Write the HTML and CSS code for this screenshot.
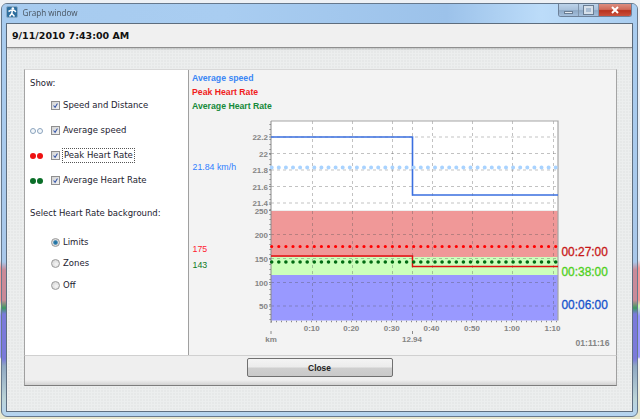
FILE: index.html
```html
<!DOCTYPE html>
<html lang="en">
<head>
    <meta charset="UTF-8">
    <title>Graph window</title>
    <link rel="stylesheet" href="styles.css">
</head>
<body>
    <div class="window">
        <div class="titlebar">
            <svg class="app-icon" viewBox="0 0 12 12">
                <rect x="0.5" y="0.5" width="11" height="11" rx="1.5" fill="#2f6f9f" stroke="#86a9c6"/>
                <circle cx="6.8" cy="2.6" r="1.3" fill="#fff"/>
                <path d="M2.5 5.5 L5 4.2 H8 L10 5.8 M6.3 4.5 L5.8 7.5 L3.5 10.5 M5.8 7.5 L8.5 10.5" fill="none" stroke="#fff" stroke-width="1.5"/>
            </svg>
            <span class="title">Graph window</span>
            <div class="caption-btns">
                <div class="cap-btn cap-min"><span class="glyph-min"></span></div>
                <div class="cap-btn cap-max"><span class="glyph-max"></span></div>
                <div class="cap-btn cap-close">
                    <svg class="glyph-close" viewBox="0 0 10 8"><path d="M2 1 L8 7 M8 1 L2 7" stroke="#fff" stroke-width="2"/></svg>
                </div>
            </div>
        </div>

        <div class="client">
            <div class="header">9/11/2010 7:43:00 AM</div>

            <div class="content">
                <div class="panel">
                    <!-- Left options -->
                    <div class="options">
                        <div class="heading heading-show">Show:</div>
                        <div class="row">
                            <span class="dots"></span>
                            <span class="check"><svg viewBox="0 0 9 9"><path d="M2 4.5 L4 6.8 L7 2" fill="none" stroke="#3354a8" stroke-width="1.3"/></svg></span>
                            <span class="row-label">Speed and Distance</span>
                        </div>
                        <div class="row">
                            <span class="dots"><i class="dot dot-hollow"></i><i class="dot dot-hollow"></i></span>
                            <span class="check"><svg viewBox="0 0 9 9"><path d="M2 4.5 L4 6.8 L7 2" fill="none" stroke="#3354a8" stroke-width="1.3"/></svg></span>
                            <span class="row-label">Average speed</span>
                        </div>
                        <div class="row">
                            <span class="dots"><i class="dot dot-red"></i><i class="dot dot-red"></i></span>
                            <span class="check"><svg viewBox="0 0 9 9"><path d="M2 4.5 L4 6.8 L7 2" fill="none" stroke="#3354a8" stroke-width="1.3"/></svg></span>
                            <span class="row-label focused">Peak Heart Rate</span>
                        </div>
                        <div class="row">
                            <span class="dots"><i class="dot dot-green"></i><i class="dot dot-green"></i></span>
                            <span class="check"><svg viewBox="0 0 9 9"><path d="M2 4.5 L4 6.8 L7 2" fill="none" stroke="#3354a8" stroke-width="1.3"/></svg></span>
                            <span class="row-label">Average Heart Rate</span>
                        </div>

                        <div class="heading heading-bg">Select Heart Rate background:</div>
                        <div class="radio-row"><span class="radio radio-on"></span><span class="row-label">Limits</span></div>
                        <div class="radio-row"><span class="radio"></span><span class="row-label">Zones</span></div>
                        <div class="radio-row"><span class="radio"></span><span class="row-label">Off</span></div>
                    </div>

                    <!-- Graph -->
                    <div class="graph">
                        <div class="legend">
                            <div class="legend-speed">Average speed</div>
                            <div class="legend-peak">Peak Heart Rate</div>
                            <div class="legend-avg">Average Heart Rate</div>
                        </div>
                        <svg class="chart" viewBox="190 114 427 240">
                            <!-- plot background and heart rate zones -->
                            <rect x="272" y="121" width="287" height="89" fill="#fff"/>
                            <rect x="272" y="210" width="287" height="1.5" fill="#eee"/>
                            <rect x="272" y="211" width="287" height="46" fill="#f09898"/>
                            <rect x="272" y="257" width="287" height="18" fill="#ccffbb"/>
                            <rect x="272" y="275" width="287" height="45.5" fill="#9999ff"/>

                            <!-- grid -->
                            <path class="grid" d="M272 137 H559 M272 153.5 H559 M272 170 H559 M272 186.5 H559 M272 203 H559 M272 234.5 H559 M272 258.5 H559 M272 282.5 H559 M272 306 H559"/>
                            <path class="grid" d="M313.5 121 V320 M353.5 121 V320 M393.5 121 V320 M413.5 121 V320 M433.5 121 V320 M473.5 121 V320 M513.5 121 V320 M554.5 121 V320"/>

                            <!-- frame and ticks -->
                            <path class="frame" d="M272 121 H559 V320.5"/>
                            <path class="axis" d="M272 121 V323"/>
                            <line class="ticks" x1="271.2" y1="124" x2="271.2" y2="320"/>
                            <path class="axis" d="M270 137 H272 M270 153.5 H272 M270 170 H272 M270 186.5 H272 M270 203 H272 M270 210.5 H272 M270 234.5 H272 M270 258.5 H272 M270 282.5 H272 M270 306 H272"/>
                            <line class="ticks" x1="272" y1="321.5" x2="559" y2="321.5"/>
                            <path class="axis" d="M272 331 V334 M413.5 331 V334"/>

                            <!-- series -->
                            <path class="line-speed" d="M272 137 H413.5 V195 H559"/>
                            <line class="dots-speed" x1="272.7" y1="167.5" x2="559" y2="167.5"/>
                            <path class="line-peak" d="M272 256 H413.5 V266.5 H559"/>
                            <line class="dots-peak" x1="272.7" y1="246.5" x2="559" y2="246.5"/>
                            <line class="dots-avg" x1="272.7" y1="262" x2="559" y2="262"/>

                            <!-- axis labels -->
                            <g class="label label-end">
                                <text x="269" y="140">22.2</text>
                                <text x="269" y="156.5">22</text>
                                <text x="269" y="173">21.8</text>
                                <text x="269" y="189.5">21.6</text>
                                <text x="269" y="206">21.4</text>
                                <text x="269" y="213.5">250</text>
                                <text x="269" y="237.5">200</text>
                                <text x="269" y="261.5">150</text>
                                <text x="269" y="285.5">100</text>
                                <text x="269" y="309">50</text>
                            </g>
                            <g class="label label-mid">
                                <text x="312.7" y="331">0:10</text>
                                <text x="352.3" y="331">0:20</text>
                                <text x="392.7" y="331">0:30</text>
                                <text x="432.5" y="331">0:40</text>
                                <text x="473" y="331">0:50</text>
                                <text x="513" y="331">1:00</text>
                                <text x="553.5" y="331">1:10</text>
                                <text x="272" y="342">km</text>
                                <text x="413" y="342">12.94</text>
                            </g>
                            <text class="label total" x="576.5" y="346">01:11:16</text>

                            <!-- values left of the plot -->
                            <text class="val val-speed" x="193.5" y="170">21.84 km/h</text>
                            <text class="val val-peak" x="193.5" y="252">175</text>
                            <text class="val val-avg" x="193.5" y="268">143</text>

                            <!-- time in zone -->
                            <text class="zone zone-red" x="562.5" y="256">00:27:00</text>
                            <text class="zone zone-green" x="562.5" y="276">00:38:00</text>
                            <text class="zone zone-blue" x="562.5" y="309">00:06:00</text>
                        </svg>
                    </div>
                </div>
                <div class="button-bar">
                    <button class="close-btn">Close</button>
                </div>
            </div>
        </div>
    </div>
</body>
</html>
```

FILE: styles.css
```css
* {
    margin: 0;
    padding: 0;
    box-sizing: border-box;
}

html, body {
    width: 640px;
    height: 419px;
    overflow: hidden;
}

body {
    padding: 3px 2px 2px 1px;
    background: linear-gradient(180deg, #eef1f5 0, #dfeaf6 260px, #f09898 268px, #f09898 300px, #ccffbb 306px, #9999ff 316px, #9999ff 357px, #f4f4f4 359px, #e8e8d0 410px);
    font-family: "DejaVu Sans", sans-serif;
}

.window {
    width: 637px;
    height: 414px;
    display: flex;
    flex-direction: column;
    padding: 0 4px 4px 4px;
    border: 1px solid #66788c;
    border-radius: 6px;
    background: linear-gradient(180deg, #a9cdf0 0, #a9c8ea 258px, #c98a98 266px, #c98a98 296px, #3c9a60 304px, #7a7ada 310px, #7a7ada 355px, #8fa8c2 362px, #bcd4d8 395px, #b4d4f4 414px);
    overflow: hidden;
    filter: blur(0.35px);
}

.titlebar {
    height: 19px;
    flex-shrink: 0;
    display: flex;
    align-items: flex-start;
    margin: 0 -4px;
    padding-left: 4px;
    background: linear-gradient(90deg, #a7cbef 0%, #a9cdf1 35%, #9cc2ea 70%, #bcdcf9 85%, #a9cdf0 100%);
}

.app-icon {
    width: 12px;
    height: 12px;
    margin-top: 2px;
    flex-shrink: 0;
}

.title {
    margin: 2px 0 0 4.5px;
    font-family: "Open Sans", sans-serif;
    font-size: 8.1px;
    line-height: 14px;
    color: #47525e;
}

.caption-btns {
    display: flex;
    margin-left: auto;
    margin-right: 5px;
    height: 13px;
    border: 1px solid #6d8199;
    border-top: none;
    border-radius: 0 0 3px 3px;
    overflow: hidden;
}

.cap-btn {
    display: flex;
    align-items: center;
    justify-content: center;
}

.cap-min, .cap-max {
    width: 20px;
    background: linear-gradient(180deg, #bcd3ea 0%, #a8c0da 50%, #8ea9c6 55%, #a4bfdc 100%);
    border-right: 1px solid #7f94ab;
}

.cap-close {
    width: 32px;
    background: linear-gradient(180deg, #dc8d80 0%, #cf6a58 45%, #b8321f 55%, #c9503c 100%);
}

.glyph-min {
    width: 9px;
    height: 3px;
    margin-top: 5px;
    background: #e4ebf2;
    border: 1px solid #6a7d93;
}

.glyph-max {
    width: 9px;
    height: 8px;
    margin-top: -1px;
    background: #a9bdd3;
    border: 2px solid #d6e0ea;
    outline: 1px solid #6a7d93;
}

.glyph-close {
    width: 10px;
    height: 8px;
}

.client {
    flex: 1;
    display: flex;
    flex-direction: column;
    border: 1px solid #5f6f80;
    background-color: #e6e8e8;
    background-image:
        repeating-linear-gradient(90deg, #eceeee 0, #eceeee 1px, transparent 1px, transparent 3px),
        repeating-linear-gradient(0deg, #eceeee 0, #eceeee 1px, transparent 1px, transparent 3px);
}

.header {
    height: 24px;
    flex-shrink: 0;
    padding-left: 5px;
    background: #f0f0f0;
    border-bottom: 1px solid #8f8f8f;
    box-shadow: 0 1px 2px rgba(0,0,0,0.2);
    font-size: 9.5px;
    font-weight: bold;
    line-height: 24px;
    color: #111;
}

.content {
    flex: 1;
    display: flex;
    flex-direction: column;
    padding: 21px 15px 25px 17px;
}

.panel {
    flex: 1;
    display: flex;
    border: 1px solid #a4a4a4;
    border-top-color: #d8d8d8;
    border-bottom: none;
    min-height: 0;
}

.options {
    width: 164px;
    flex-shrink: 0;
    padding: 6px 0 0 5px;
    background: #fff;
    border-right: 1px solid #a0a0a0;
    font-size: 8.5px;
    color: #1c2230;
}

.heading {
    height: 14px;
    line-height: 14px;
}

.heading-show {
    margin-bottom: 3px;
}

.heading-bg {
    margin-top: 13px;
}

.row {
    display: flex;
    align-items: center;
    height: 25px;
}

.dots {
    width: 21px;
    display: flex;
    gap: 1px;
}

.dot {
    width: 6px;
    height: 6px;
    border-radius: 50%;
}

.dot-hollow { border: 1px solid #8ba3bd; background: #f4f8fc; }
.dot-red { background: #ee1111; }
.dot-green { background: #0a6e28; }

.check {
    width: 9px;
    height: 9px;
    display: block;
    flex-shrink: 0;
    margin-right: 3px;
    border: 1px solid #8f8f8f;
    background: linear-gradient(135deg, #d4d4d4, #f2f2f2);
}

.check svg {
    display: block;
    width: 7px;
    height: 7px;
}

.row-label {
    line-height: 13px;
}

.focused {
    padding: 0 1px;
    margin-left: -1px;
    border: 1px dotted #555;
}

.radio-row {
    display: flex;
    align-items: center;
    gap: 3px;
    height: 21.3px;
    padding-left: 21px;
}

.heading-bg + .radio-row {
    margin-top: 12px;
}

.radio {
    width: 9px;
    height: 9px;
    flex-shrink: 0;
    border-radius: 50%;
    border: 1px solid #9a9a9a;
    background: radial-gradient(circle at 60% 60%, #f6f6f6, #cfcfcf);
}

.radio-on {
    background: radial-gradient(circle, #1f6f9f 0, #2f7fae 35%, #dcdcdc 55%);
}

.graph {
    flex: 1;
    background: #f3f3f3;
    display: flex;
    flex-direction: column;
    min-width: 0;
}

.legend {
    height: 44px;
    flex-shrink: 0;
    padding: 1px 0 0 3px;
    font-family: "Liberation Sans", sans-serif;
    font-size: 8.7px;
    font-weight: bold;
    line-height: 14px;
}

.legend-speed { color: #3a86f5; }
.legend-peak { color: #f01c1c; }
.legend-avg { color: #158a3a; }

.chart {
    display: block;
    width: 427px;
    height: 240px;
}

.grid {
    fill: none;
    stroke: rgba(80,80,80,0.35);
    stroke-width: 1;
    stroke-dasharray: 3 3;
}

.frame {
    fill: none;
    stroke: #a6a6a6;
    stroke-width: 1.2;
}

.axis {
    fill: none;
    stroke: #8a8a8a;
    stroke-width: 1;
}

.ticks {
    stroke: #8a8a8a;
    stroke-width: 1.6;
    stroke-dasharray: 1 4;
}

.line-speed {
    fill: none;
    stroke: #3a6fe0;
    stroke-width: 1.6;
}

.line-peak {
    fill: none;
    stroke: #e01010;
    stroke-width: 1.5;
}

.dots-speed, .dots-peak, .dots-avg {
    stroke-linecap: round;
    stroke-dasharray: 0 7.1;
    stroke-width: 3.6;
}

.dots-speed { stroke: #a9d3ff; stroke-width: 4; }
.dots-peak { stroke: #ff0000; stroke-width: 3.2; }
.dots-avg { stroke: #006b12; }

.label {
    font-family: "Liberation Sans", sans-serif;
    font-size: 8px;
    font-weight: bold;
    fill: #858585;
}

.label-end text { text-anchor: end; }
.label-mid text { text-anchor: middle; }

.total {
    font-size: 8.6px;
}

.val {
    font-family: "Liberation Sans", sans-serif;
    font-size: 8.8px;
}

.val-speed { fill: #2f80ff; }
.val-peak { fill: #ff2030; }
.val-avg { fill: #0e7a25; }

.zone {
    font-family: "Liberation Sans", sans-serif;
    font-size: 11.9px;
    stroke-width: 0.3px;
}

.zone-red { fill: #c81818; stroke: #c81818; }
.zone-green { fill: #4fd01c; stroke: #4fd01c; }
.zone-blue { fill: #1452cc; stroke: #1452cc; }

.button-bar {
    height: 31px;
    flex-shrink: 0;
    display: flex;
    justify-content: center;
    padding-top: 2px;
    background: linear-gradient(180deg, #efefef 0, #efefef 24px, #d2d2d2 100%);
    border: 1px solid #a0a0a0;
    border-top-color: #d0d0d0;
    border-bottom-color: #7d7d7d;
}

.close-btn {
    width: 146px;
    height: 19px;
    margin-left: -2px;
    background: linear-gradient(180deg, #f4f4f4 0, #ececec 45%, #cfcfcf 55%, #c9c9c9 100%);
    border: 1px solid #707070;
    border-radius: 2px;
    font-family: "Liberation Sans", sans-serif;
    font-size: 8.4px;
    font-weight: bold;
    color: #222;
}
```
